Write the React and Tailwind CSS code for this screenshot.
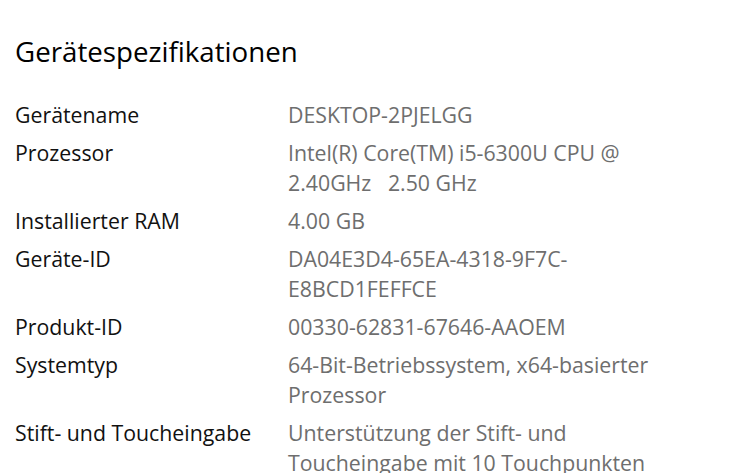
import React from 'react';

const specs = [
  { label: 'Gerätename', lines: ['DESKTOP-2PJELGG'] },
  { label: 'Prozessor', lines: ['Intel(R) Core(TM) i5-6300U CPU @', '2.40GHz   2.50 GHz'] },
  { label: 'Installierter RAM', lines: ['4.00 GB'] },
  { label: 'Geräte-ID', lines: ['DA04E3D4-65EA-4318-9F7C-', 'E8BCD1FEFFCE'] },
  { label: 'Produkt-ID', lines: ['00330-62831-67646-AAOEM'] },
  { label: 'Systemtyp', lines: ['64-Bit-Betriebssystem, x64-basierter', 'Prozessor'] },
  { label: 'Stift- und Toucheingabe', lines: ['Unterstützung der Stift- und', 'Toucheingabe mit 10 Touchpunkten'] },
];

export default function App() {
  return (
    <div className="w-[750px] h-[473px] overflow-hidden bg-white pl-[15px] pt-[33px] font-['Open_Sans',sans-serif]">
      <h1 className="text-[27.7px] leading-[36px] text-black mb-[31px]">Gerätespezifikationen</h1>
      <div className="flex flex-col gap-[8px]">
        {specs.map(s => (
          <div key={s.label} className="flex text-[21.3px] leading-[30px]">
            <div className="w-[273px] shrink-0 text-[#111]">{s.label}</div>
            <div className="text-[#6e6e6e] whitespace-pre">
              {s.lines.map((l, i) => <div key={i}>{l}</div>)}
            </div>
          </div>
        ))}
      </div>
    </div>
  );
}
